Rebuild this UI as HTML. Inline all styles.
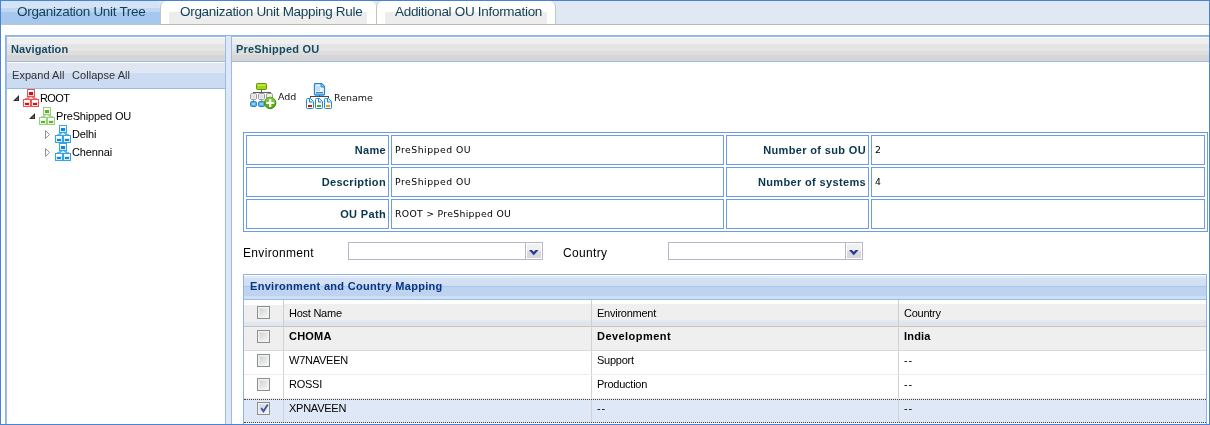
<!DOCTYPE html>
<html>
<head>
<meta charset="utf-8">
<title>Organization Unit Tree</title>
<style>
html,body{margin:0;padding:0;}
body{width:1210px;height:425px;overflow:hidden;background:#fff;position:relative;font-family:"Liberation Sans",sans-serif;font-size:11px;color:#000;}
.abs{position:absolute;}
svg{display:block;}
#frame{left:0;top:0;width:1208px;height:423px;border:1px solid #4584d6;z-index:50;pointer-events:none;}
#tabbar{left:1px;top:1px;width:1208px;height:23px;background:#e0e8f3;border-bottom:1px solid #b9bdae;}
.tab{top:1px;height:23px;will-change:transform;}
.tabtxt{position:absolute;top:0;height:21px;line-height:21px;font-size:13.5px;color:#0f3f55;white-space:nowrap;letter-spacing:-0.3px;}
#tab1{left:1px;width:159px;border-radius:0 6px 0 0;background:linear-gradient(#d4e3f5 0,#d4e3f5 7px,#c1d6f1 7px,#c1d6f1 11px,#a7c8ee 11px,#a7c8ee 100%);}
#tab2{left:160px;width:216px;background:#fff;border-radius:6px 6px 0 0;border-left:1px solid #c3c5ba;box-sizing:border-box;}
#tab3{left:376px;width:180px;background:#fff;border-radius:6px 6px 0 0;border-left:1px solid #c3c5ba;border-right:1px solid #c3c5ba;box-sizing:border-box;}
.tabgrey{position:absolute;top:11px;height:12px;background:#ededed;}
#cont{will-change:transform;left:5px;top:35px;width:1300px;height:500px;border:1px solid #8db2e3;background:#dfe8f6;box-sizing:border-box;}
.panel{border:1px solid #99bbe8;background:#fff;box-sizing:border-box;}
.phead{position:absolute;left:0;right:0;top:0;height:24px;border-bottom:1px solid #99bbe8;
 background:linear-gradient(#fbfbfb 0,#fbfbfb 1px,#f0f0f0 1px,#efefef 7px,#e5e5e5 7px,#e4e4e4 14px,#dedede 14px,#dddddd 18px,#d6d6d6 18px,#d5d5d5 24px);}
.ptitle{position:absolute;font-weight:bold;font-size:11px;color:#164b66;white-space:nowrap;line-height:13px;}
#tbar{left:0;top:25px;width:218px;height:26px;border-bottom:1px solid #99bbe8;background:linear-gradient(#fff 0,#fff 1px,#e0e7f3 1px,#e0e7f3 11px,#cbdbf2 11px,#cbdbf2 100%);}
.tbtxt{top:7px;font-size:11px;line-height:13px;color:#333;white-space:nowrap;letter-spacing:0.05px;}
.ttxt{font-size:11px;line-height:13px;color:#000;white-space:nowrap;letter-spacing:-0.15px;}
.btxt{font-family:"DejaVu Sans","Liberation Sans",sans-serif;font-size:9.5px;line-height:12px;color:#111;white-space:nowrap;}
#itable{border:1px solid #6c9bee;box-sizing:border-box;}
.icell{border:1px solid #6c9bee;box-sizing:border-box;white-space:nowrap;}
.icell span{position:absolute;top:7px;line-height:14px;}
.val span{top:7px;}
.lbl span{right:2px;font-weight:bold;font-size:11px;color:#08344c;letter-spacing:0.35px;}
.val span{left:3px;font-family:"DejaVu Sans","Liberation Sans",sans-serif;font-size:9.3px;color:#000;letter-spacing:0.5px;}
.flbl{font-size:12px;line-height:14px;color:#000;white-space:nowrap;letter-spacing:0.33px;}
.combo{width:195px;height:18px;border:1px solid #b3b7ca;box-sizing:border-box;background:#fff;}
.trig{position:absolute;right:0;top:0;width:16px;height:16px;border-left:1px solid #b3b7ca;box-shadow:inset 0 0 0 1px #fff;background:linear-gradient(#f1f1f1 0,#efefef 50%,#dadada 50%,#d8d8d8 100%);}
#grid{border:1px solid #8db2e3;box-sizing:border-box;background:#fff;}
.ghead{position:absolute;left:0;top:0;right:0;height:24px;border-bottom:1px solid #99bbe8;background:linear-gradient(#fff 0,#fff 1px,#e1e9f5 1px,#e1e9f5 3px,#d3e1f3 3px,#cfdff3 11px,#a9c6ec 11px,#a9c6ec 12px,#bed3f0 12px,#bed3f0 21px,#cfdff3 21px,#cfdff3 24px);}
.gtitle{font-weight:bold;font-size:11px;line-height:13px;color:#0a3582;white-space:nowrap;letter-spacing:0.3px;}
.ghdr{background:linear-gradient(#fff 0,#fff 4px,#efefef 4px,#efefef 20px,#dfe8f6 20px,#dfe8f6 22px,#e4e4e4 22px,#e4e4e4 26px,#c6c6c6 26px,#c6c6c6 27px);}
.ghdr0{background:linear-gradient(#fff 0,#fff 5px,#efefef 5px,#efefef 22px,#dfe8f6 22px,#dfe8f6 25px,#e4e4e4 25px,#e4e4e4 26px,#c6c6c6 26px,#c6c6c6 27px);}
.grow{border-bottom:1px solid #ededed;box-sizing:border-box;}
.grow.sel{border-top:1px dotted #444;border-bottom:1px dotted #444;}
.gtxt{font-size:11px;line-height:13px;white-space:nowrap;color:#000;letter-spacing:-0.25px;}
.gtxt.b{font-weight:bold;letter-spacing:0.2px;}
.cb{width:13px;height:13px;box-sizing:border-box;border:1px solid #8e8f8f;background:linear-gradient(135deg,#c9cccf 0,#dfe1e3 45%,#f6f6f6 100%);box-shadow:inset 0 0 0 1px #f1f1f1,inset 0 0 0 2px rgba(255,255,255,0.35);}
</style>
</head>
<body>
<div id="tabbar" class="abs"></div>
<div id="tab1" class="abs tab"><span class="tabtxt" style="left:16px;">Organization Unit Tree</span></div>
<div class="abs" style="left:1px;top:24px;width:159px;height:1px;background:#b7c7d2;"></div>
<div id="tab2" class="abs tab"><div class="tabgrey" style="left:8px;width:198px;"></div><span class="tabtxt" style="left:19px;">Organization Unit Mapping Rule</span></div>
<div id="tab3" class="abs tab"><div class="tabgrey" style="left:8px;width:162px;"></div><span class="tabtxt" style="left:18px;">Additional OU Information</span></div>

<div id="cont" class="abs">
  <div id="left" class="abs panel" style="left:0;top:0;width:220px;height:480px;">
    <div class="phead"><span class="ptitle" style="left:4px;top:6px;letter-spacing:0.1px;">Navigation</span></div>
    <div id="tbar" class="abs"><span class="abs tbtxt" style="left:5px;">Expand All</span><span class="abs tbtxt" style="left:65px;">Collapse All</span></div>
    <span class="abs" style="left:6px;top:58px;width:6px;height:6px;"><svg class="tarrow" width="6" height="6" viewBox="0 0 6 6"><path d="M6 0V6H0Z" fill="#2e2e2e"/><path d="M5 2.6V5H2.6Z" fill="#666"/></svg></span><span class="abs" style="left:16px;top:52px;width:16px;height:18px;"><svg class="ticon" width="16" height="18" viewBox="0 0 16 18" shape-rendering="crispEdges"><rect x="4.5" y="0.5" width="7" height="7" fill="#fff" stroke="#ec5256"/><rect x="5" y="3" width="6" height="4" fill="#fbdcdd"/><rect x="6" y="3" width="4" height="3" fill="#e00a16"/><path d="M4 8h8l2 2h-12z" fill="#fbdcdd"/><path d="M4 8.5h3M9 8.5h3M2 9.5h4M10 9.5h4" stroke="#ec5256" stroke-width="1" fill="none" opacity="0.7"/><rect x="0.5" y="10.5" width="7" height="7" fill="#fff" stroke="#ec5256"/><rect x="8.5" y="10.5" width="7" height="7" fill="#fff" stroke="#ec5256"/><rect x="1" y="13" width="6" height="4" fill="#fbdcdd"/><rect x="9" y="13" width="6" height="4" fill="#fbdcdd"/><rect x="2" y="14" width="4" height="2" fill="#e00a16"/><rect x="10" y="14" width="4" height="2" fill="#e00a16"/></svg></span><span class="abs ttxt" style="left:33px;top:55px;"><span style="letter-spacing:-0.6px">ROOT</span></span><span class="abs" style="left:22px;top:76px;width:6px;height:6px;"><svg class="tarrow" width="6" height="6" viewBox="0 0 6 6"><path d="M6 0V6H0Z" fill="#2e2e2e"/><path d="M5 2.6V5H2.6Z" fill="#666"/></svg></span><span class="abs" style="left:32px;top:70px;width:16px;height:18px;"><svg class="ticon" width="16" height="18" viewBox="0 0 16 18" shape-rendering="crispEdges"><rect x="4.5" y="0.5" width="7" height="7" fill="#fff" stroke="#98cf7a"/><rect x="5" y="3" width="6" height="4" fill="#e4f4db"/><rect x="6" y="3" width="4" height="3" fill="#5fb034"/><path d="M4 8h8l2 2h-12z" fill="#e4f4db"/><path d="M4 8.5h3M9 8.5h3M2 9.5h4M10 9.5h4" stroke="#98cf7a" stroke-width="1" fill="none" opacity="0.7"/><rect x="0.5" y="10.5" width="7" height="7" fill="#fff" stroke="#98cf7a"/><rect x="8.5" y="10.5" width="7" height="7" fill="#fff" stroke="#98cf7a"/><rect x="1" y="13" width="6" height="4" fill="#e4f4db"/><rect x="9" y="13" width="6" height="4" fill="#e4f4db"/><rect x="2" y="14" width="4" height="2" fill="#5fb034"/><rect x="10" y="14" width="4" height="2" fill="#5fb034"/></svg></span><span class="abs ttxt" style="left:49px;top:73px;">PreShipped OU</span><span class="abs" style="left:38px;top:93px;width:6px;height:9px;"><svg class="tarrow2" width="6" height="9" viewBox="0 0 6 9"><path d="M0.5 0.5L4.5 4.5L0.5 8.5Z" fill="#fff" stroke="#929292" stroke-width="1"/></svg></span><span class="abs" style="left:48px;top:88px;width:16px;height:18px;"><svg class="ticon" width="16" height="18" viewBox="0 0 16 18" shape-rendering="crispEdges"><rect x="4.5" y="0.5" width="7" height="7" fill="#fff" stroke="#33a4ec"/><rect x="5" y="3" width="6" height="4" fill="#d3ecfb"/><rect x="6" y="3" width="4" height="3" fill="#1985d8"/><path d="M4 8h8l2 2h-12z" fill="#d3ecfb"/><path d="M4 8.5h3M9 8.5h3M2 9.5h4M10 9.5h4" stroke="#33a4ec" stroke-width="1" fill="none" opacity="0.7"/><rect x="0.5" y="10.5" width="7" height="7" fill="#fff" stroke="#33a4ec"/><rect x="8.5" y="10.5" width="7" height="7" fill="#fff" stroke="#33a4ec"/><rect x="1" y="13" width="6" height="4" fill="#d3ecfb"/><rect x="9" y="13" width="6" height="4" fill="#d3ecfb"/><rect x="2" y="14" width="4" height="2" fill="#1985d8"/><rect x="10" y="14" width="4" height="2" fill="#1985d8"/></svg></span><span class="abs ttxt" style="left:65px;top:91px;">Delhi</span><span class="abs" style="left:38px;top:111px;width:6px;height:9px;"><svg class="tarrow2" width="6" height="9" viewBox="0 0 6 9"><path d="M0.5 0.5L4.5 4.5L0.5 8.5Z" fill="#fff" stroke="#929292" stroke-width="1"/></svg></span><span class="abs" style="left:48px;top:106px;width:16px;height:18px;"><svg class="ticon" width="16" height="18" viewBox="0 0 16 18" shape-rendering="crispEdges"><rect x="4.5" y="0.5" width="7" height="7" fill="#fff" stroke="#33a4ec"/><rect x="5" y="3" width="6" height="4" fill="#d3ecfb"/><rect x="6" y="3" width="4" height="3" fill="#1985d8"/><path d="M4 8h8l2 2h-12z" fill="#d3ecfb"/><path d="M4 8.5h3M9 8.5h3M2 9.5h4M10 9.5h4" stroke="#33a4ec" stroke-width="1" fill="none" opacity="0.7"/><rect x="0.5" y="10.5" width="7" height="7" fill="#fff" stroke="#33a4ec"/><rect x="8.5" y="10.5" width="7" height="7" fill="#fff" stroke="#33a4ec"/><rect x="1" y="13" width="6" height="4" fill="#d3ecfb"/><rect x="9" y="13" width="6" height="4" fill="#d3ecfb"/><rect x="2" y="14" width="4" height="2" fill="#1985d8"/><rect x="10" y="14" width="4" height="2" fill="#1985d8"/></svg></span><span class="abs ttxt" style="left:65px;top:109px;">Chennai</span>
  </div>
  <div id="right" class="abs panel" style="left:225px;top:0;width:1060px;height:480px;">
    <div class="phead"><span class="ptitle" style="left:4px;top:6px;letter-spacing:0.2px;">PreShipped OU</span></div>
    <span class="abs" style="left:18px;top:46px;"><svg width="27" height="27" viewBox="0 0 27 27">
<g shape-rendering="crispEdges">
<path d="M11.5 7v2.5M3.5 11V9.5H20.5V11M11.5 9.5V11" stroke="#5d5d66" fill="none"/>
<path d="M3.5 17v1M11.5 17v1" stroke="#c08050" fill="none"/>
</g>
<rect x="6.5" y="0.5" width="10" height="6" rx="0.8" fill="#a5d413" stroke="#5f9c0a"/>
<rect x="7.5" y="1.5" width="8" height="1.2" fill="#cdee68"/>
<rect x="0.5" y="10.5" width="6" height="6" rx="1.2" fill="#f0f0f0" stroke="#9a9a9a"/>
<rect x="8.5" y="10.5" width="6" height="6" rx="1.2" fill="#f0f0f0" stroke="#9a9a9a"/>
<rect x="16.5" y="10.5" width="6" height="6" rx="1.2" fill="#f0f0f0" stroke="#9a9a9a"/>
<rect x="2" y="12" width="3" height="3" fill="#dcdcdc"/><rect x="10" y="12" width="3" height="3" fill="#dcdcdc"/>
<rect x="0.5" y="18.5" width="6" height="5" rx="1.2" fill="#58b0e6" stroke="#2389cc"/>
<rect x="8.5" y="18.5" width="6" height="5" rx="1.2" fill="#58b0e6" stroke="#2389cc"/>
<rect x="2" y="20" width="3" height="2" fill="#8fd0f4"/><rect x="10" y="20" width="3" height="2" fill="#8fd0f4"/>
<circle cx="20.2" cy="20" r="5.7" fill="#5cae1b" stroke="#3f8f10" stroke-width="1"/>
<path d="M15.4 19a4.8 4.8 0 0 1 9.6 0z" fill="#8fd243" opacity="0.7"/>
<path d="M20.2 16v8M16.2 20h8" stroke="#fff" stroke-width="2.2" fill="none"/>
</svg></span>
    <span class="abs btxt" style="left:46px;top:54px;">Add</span>
    <span class="abs" style="left:74px;top:46px;"><svg width="27" height="27" viewBox="0 0 27 27"><g shape-rendering="crispEdges"><path d="M13.5 12v2M4.5 15V13.5H22.5V15" stroke="#4a4a4a" fill="none"/></g><path d="M8.5 1.5q0 -1 1 -1h6l3 3v7.5q0 1 -1 1h-8q-1 0 -1 -1z" fill="#eef6fd" stroke="#2488cb" stroke-width="1.3"/><path d="M15 1v3h3" stroke="#2488cb" fill="#9fcdf0"/><rect x="10" y="3" width="4" height="5" fill="#c4ddf5"/><rect x="10" y="9" width="7" height="1.5" fill="#2b8ccd"/><path d="M0.5 16.5q0 -1 1 -1h3l3 3v6q0 1 -1 1h-5q-1 0 -1 -1z" fill="#f3f9fe" stroke="#2488cb"/><path d="M3.5 16v3h3" stroke="#2488cb" fill="#cfe6f8"/><rect x="2" y="22" width="4" height="2" fill="#e81414"/><path d="M9.5 16.5q0 -1 1 -1h3l3 3v6q0 1 -1 1h-5q-1 0 -1 -1z" fill="#f3f9fe" stroke="#2488cb"/><path d="M12.5 16v3h3" stroke="#2488cb" fill="#cfe6f8"/><rect x="11" y="22" width="4" height="2" fill="#5aa61c"/><path d="M18.5 16.5q0 -1 1 -1h3l3 3v6q0 1 -1 1h-5q-1 0 -1 -1z" fill="#f3f9fe" stroke="#2488cb"/><path d="M21.5 16v3h3" stroke="#2488cb" fill="#cfe6f8"/><rect x="20" y="22" width="4" height="2" fill="#f59a17"/></svg></span>
    <span class="abs btxt" style="left:102px;top:55px;">Rename</span>
    <div class="abs" id="itable" style="left:11px;top:95px;width:965px;height:100px;"></div><div class="abs icell lbl" style="left:14px;top:98px;width:143px;height:30px;"><span>Name</span></div><div class="abs icell val" style="left:159px;top:98px;width:333px;height:30px;"><span>PreShipped OU</span></div><div class="abs icell lbl" style="left:494px;top:98px;width:143px;height:30px;"><span>Number of sub OU</span></div><div class="abs icell val" style="left:639px;top:98px;width:334px;height:30px;"><span>2</span></div><div class="abs icell lbl" style="left:14px;top:130px;width:143px;height:30px;"><span>Description</span></div><div class="abs icell val" style="left:159px;top:130px;width:333px;height:30px;"><span>PreShipped OU</span></div><div class="abs icell lbl" style="left:494px;top:130px;width:143px;height:30px;"><span>Number of systems</span></div><div class="abs icell val" style="left:639px;top:130px;width:334px;height:30px;"><span>4</span></div><div class="abs icell lbl" style="left:14px;top:162px;width:143px;height:30px;"><span>OU Path</span></div><div class="abs icell val" style="left:159px;top:162px;width:333px;height:30px;"><span><i style="font-style:normal;letter-spacing:0.3px">ROOT &gt; PreShipped OU</i></span></div><div class="abs icell lbl" style="left:494px;top:162px;width:143px;height:30px;"></div><div class="abs icell val" style="left:639px;top:162px;width:334px;height:30px;"></div>
    <span class="abs flbl" style="left:11px;top:209px;">Environment</span>
    <div class="abs combo" style="left:116px;top:205px;"><div class="trig"><svg width="10" height="6" viewBox="0 0 10 6" style="position:absolute;left:3px;top:7px;"><path d="M0 0H3L4.75 1.9L6.5 0H9.5L4.75 5.2Z" fill="#1f3a93"/></svg></div></div>
    <span class="abs flbl" style="left:331px;top:209px;">Country</span>
    <div class="abs combo" style="left:436px;top:205px;"><div class="trig"><svg width="10" height="6" viewBox="0 0 10 6" style="position:absolute;left:3px;top:7px;"><path d="M0 0H3L4.75 1.9L6.5 0H9.5L4.75 5.2Z" fill="#1f3a93"/></svg></div></div>
    <div class="abs" id="grid" style="left:11px;top:237px;width:964px;height:200px;"><div class="ghead"><span class="abs gtitle" style="left:6px;top:5px;">Environment and Country Mapping</span></div><div class="abs ghdr" style="left:0;top:25px;width:962px;height:27px;"></div><div class="abs ghdr0" style="left:0;top:25px;width:39px;height:27px;"></div><div class="abs" style="left:39px;top:25px;width:1px;height:27px;background:#cfcfcf;"></div><div class="abs" style="left:347px;top:25px;width:1px;height:27px;background:#cfcfcf;"></div><div class="abs" style="left:654px;top:25px;width:1px;height:27px;background:#cfcfcf;"></div><span class="abs cb" style="left:13px;top:31px;"></span><span class="abs gtxt" style="left:45px;top:32px;">Host Name</span><span class="abs gtxt" style="left:353px;top:32px;">Environment</span><span class="abs gtxt" style="left:660px;top:32px;">Country</span><div class="abs grow" style="left:0;top:52px;width:962px;height:24px;background:#efefef;border-bottom-color:#d9d9d9;"><div class="abs" style="left:39px;top:0;width:1px;height:23px;background:#d2d2d2;"></div><div class="abs" style="left:347px;top:0;width:1px;height:23px;background:#d2d2d2;"></div><div class="abs" style="left:654px;top:0;width:1px;height:23px;background:#d2d2d2;"></div><span class="abs cb" style="left:13px;top:3px;"></span><span class="abs gtxt b" style="left:45px;top:3px;">CHOMA</span><span class="abs gtxt b" style="left:353px;top:3px;"><span style="letter-spacing:0.45px">Development</span></span><span class="abs gtxt b" style="left:660px;top:3px;">India</span></div><div class="abs grow" style="left:0;top:76px;width:962px;height:24px;background:#ffffff;"><div class="abs" style="left:39px;top:0;width:1px;height:23px;background:#d2d2d2;"></div><div class="abs" style="left:347px;top:0;width:1px;height:23px;background:#d2d2d2;"></div><div class="abs" style="left:654px;top:0;width:1px;height:23px;background:#d2d2d2;"></div><span class="abs cb" style="left:13px;top:3px;"></span><span class="abs gtxt" style="left:45px;top:3px;">W7NAVEEN</span><span class="abs gtxt" style="left:353px;top:3px;">Support</span><span class="abs gtxt" style="left:660px;top:3px;"><span style="letter-spacing:0.9px">--</span></span></div><div class="abs grow" style="left:0;top:100px;width:962px;height:24px;background:#ffffff;"><div class="abs" style="left:39px;top:0;width:1px;height:23px;background:#d2d2d2;"></div><div class="abs" style="left:347px;top:0;width:1px;height:23px;background:#d2d2d2;"></div><div class="abs" style="left:654px;top:0;width:1px;height:23px;background:#d2d2d2;"></div><span class="abs cb" style="left:13px;top:3px;"></span><span class="abs gtxt" style="left:45px;top:3px;">ROSSI</span><span class="abs gtxt" style="left:353px;top:3px;">Production</span><span class="abs gtxt" style="left:660px;top:3px;"><span style="letter-spacing:0.9px">--</span></span></div><div class="abs grow sel" style="left:0;top:124px;width:962px;height:24px;background:#dfe8f6;"><div class="abs" style="left:39px;top:0;width:1px;height:22px;background:#d2d2d2;"></div><div class="abs" style="left:347px;top:0;width:1px;height:22px;background:#d2d2d2;"></div><div class="abs" style="left:654px;top:0;width:1px;height:22px;background:#d2d2d2;"></div><span class="abs cb" style="left:13px;top:2px;"><svg class="abs" style="left:0.5px;top:0px" width="11" height="11" viewBox="0 0 11 11"><path d="M2.2 5.0L4.5 8.3L8.8 1.6" stroke="#3a56a8" stroke-width="1.9" fill="none"/></svg></span><span class="abs gtxt" style="left:45px;top:2px;">XPNAVEEN</span><span class="abs gtxt" style="left:353px;top:2px;"><span style="letter-spacing:0.9px">--</span></span><span class="abs gtxt" style="left:660px;top:2px;"><span style="letter-spacing:0.9px">--</span></span></div></div>
  </div>
</div>
<div id="frame" class="abs"></div>
</body>
</html>
